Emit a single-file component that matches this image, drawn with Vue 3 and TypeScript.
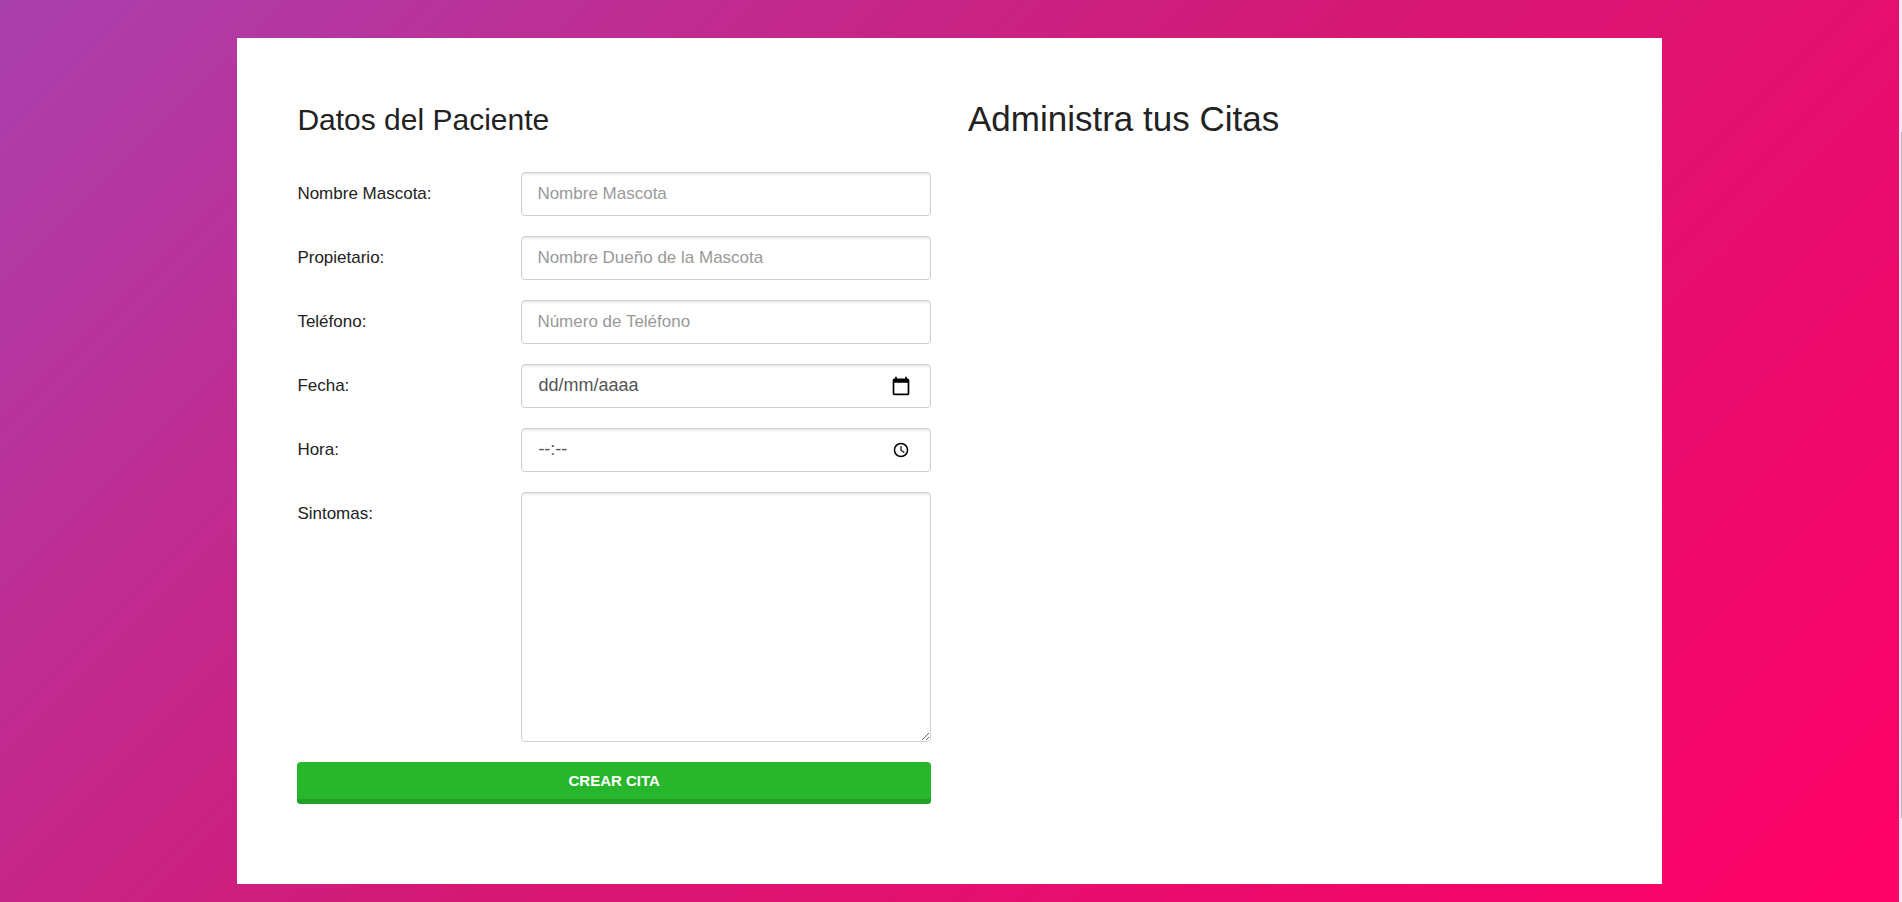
<script setup lang="ts">
import { reactive } from 'vue'

type FieldName = 'mascota' | 'propietario' | 'telefono' | 'fecha' | 'hora'

interface Field {
  name: FieldName
  label: string
  placeholder: string
  icon?: 'calendar' | 'clock'
}

const fields: Field[] = [
  { name: 'mascota', label: 'Nombre Mascota:', placeholder: 'Nombre Mascota' },
  { name: 'propietario', label: 'Propietario:', placeholder: 'Nombre Dueño de la Mascota' },
  { name: 'telefono', label: 'Teléfono:', placeholder: 'Número de Teléfono' },
  { name: 'fecha', label: 'Fecha:', placeholder: 'dd/mm/aaaa', icon: 'calendar' },
  { name: 'hora', label: 'Hora:', placeholder: '--:--', icon: 'clock' },
]

const cita = reactive({
  mascota: '',
  propietario: '',
  telefono: '',
  fecha: '',
  hora: '',
  sintomas: '',
})
</script>

<template>
  <div class="page">
    <main class="card">
      <section>
        <h2>Datos del Paciente</h2>
        <form @submit.prevent>
          <div v-for="f in fields" :key="f.name" class="row">
            <label :for="f.name">{{ f.label }}</label>
            <div class="control" :class="{ picker: f.icon }">
              <input :id="f.name" v-model="cita[f.name]" type="text" :placeholder="f.placeholder" />
              <svg v-if="f.icon === 'calendar'" class="icon" viewBox="0 0 24 24" aria-hidden="true">
                <path d="M20 3h-1V1h-2v2H7V1H5v2H4c-1.100 0-2 .9-2 2v16c0 1.100.9 2 2 2h16c1.100 0 2-.9 2-2V5c0-1.100-.9-2-2-2zm0 18H4V8h16v13z" />
              </svg>
              <svg v-if="f.icon === 'clock'" class="icon" viewBox="0 0 20 20" aria-hidden="true">
                <path d="M10 2.700a7.300 7.300 0 1 0 0 14.600a7.300 7.300 0 1 0 0-14.600zM10 4.200a5.800 5.800 0 1 1 0 11.600a5.800 5.800 0 1 1 0-11.600z" fill-rule="evenodd" />
                <path d="M9.400 6h1.200v3.900l3.100 2l-.7 1l-3.600-2.400z" />
              </svg>
            </div>
          </div>
          <div class="row">
            <label for="sintomas">Sintomas:</label>
            <div class="control">
              <textarea id="sintomas" v-model="cita.sintomas"></textarea>
            </div>
          </div>
          <button type="submit">Crear Cita</button>
        </form>
      </section>
      <section>
        <h1>Administra tus Citas</h1>
      </section>
    </main>
    <div class="track"><div class="thumb"></div></div>
  </div>
</template>

<style>
body {
  margin: 0;
}
</style>

<style scoped>
.page {
  box-sizing: border-box;
  position: relative;
  min-height: 100vh;
  padding: 38px 3px 18px 0;
  background: linear-gradient(135deg, #aa40ae 0%, #d61773 50%, #ff0066 100%);
  font-family: Arial, "Liberation Sans", sans-serif;
  color: #222;
}
.track {
  display: flex;
  flex-direction: column;
  align-items: flex-end;
  position: absolute;
  top: 0;
  right: 0;
  bottom: 0;
  width: 3px;
  background: #fde6f2;
}
.thumb {
  width: 1px;
  height: 76%;
  margin-top: 132px;
  background: #c1b5ba;
}
.card {
  box-sizing: border-box;
  display: grid;
  grid-template-columns: 1fr 1fr;
  gap: 37px;
  width: 75%;
  margin: 0 auto;
  padding: 60px 60px 80px;
  background: #fff;
}
h1,
h2 {
  margin: 0;
  font-weight: 400;
}
h1 {
  font-size: 35px;
  line-height: 42px;
}
h2 {
  margin-bottom: 30px;
  font-size: 30px;
  line-height: 44px;
}
.row {
  display: grid;
  grid-template-columns: 224px 1fr;
  margin-bottom: 20px;
}
label {
  font-size: 17px;
  line-height: 44px;
}
.control {
  position: relative;
  display: flex;
}
input,
textarea {
  box-sizing: border-box;
  width: 100%;
  height: 44px;
  margin: 0;
  padding: 0 15px 1px;
  border: 1px solid #d1d1d1;
  border-radius: 4px;
  background: #fff;
  box-shadow: inset 0 2px 2px rgba(0, 0, 0, 0.08);
  color: #555;
  font: inherit;
  font-size: 17px;
}
textarea {
  height: 250px;
  resize: vertical;
}
input::placeholder {
  color: #999;
  opacity: 1;
}
.picker input {
  padding-left: 16px;
  font-size: 18px;
}
.picker input::placeholder {
  color: #555;
}
.icon {
  position: absolute;
  top: 12px;
  right: 20px;
  width: 20px;
  height: 20px;
  fill: #000;
}
button {
  display: block;
  width: 100%;
  height: 42px;
  padding: 0 0 6px;
  border: 0;
  border-radius: 4px;
  background: #28b62c;
  box-shadow: inset 0 -5px 0 #23a127;
  color: #fff;
  font: inherit;
  font-size: 15px;
  font-weight: 700;
  text-transform: uppercase;
  cursor: pointer;
}
</style>
